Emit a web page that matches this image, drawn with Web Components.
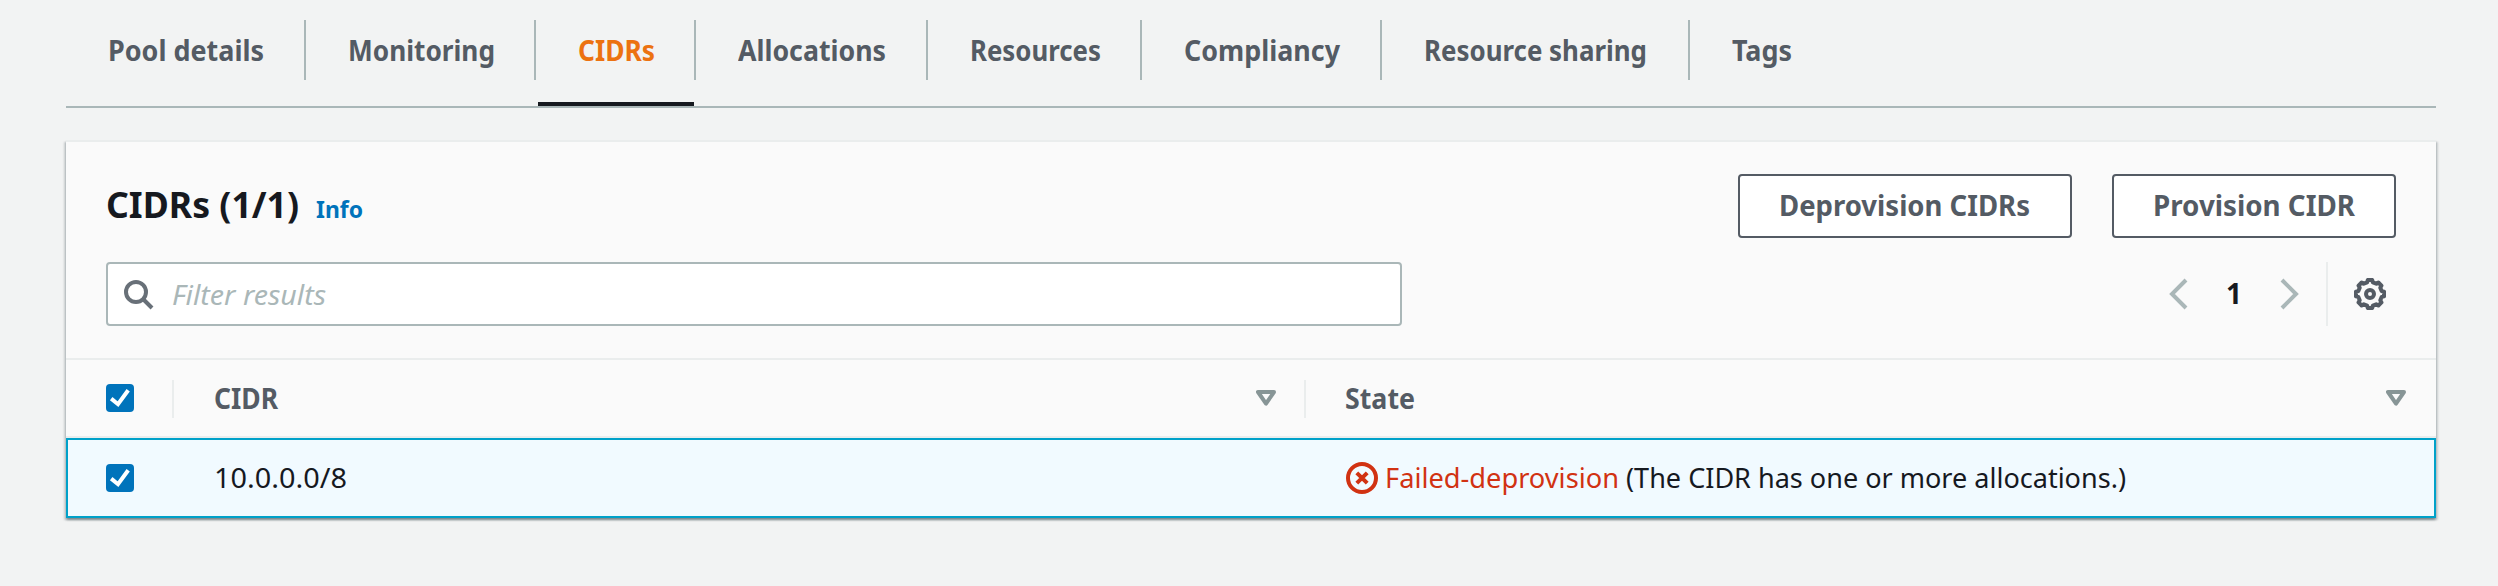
<!DOCTYPE html>
<html lang="en">
<head>
<meta charset="utf-8">
<title>CIDRs</title>
<style>
body{margin:0;background:#f2f3f3;font-family:"Noto Sans","Open Sans",sans-serif;font-size:28px;color:#16191f;height:586px;overflow:hidden}
</style>
</head>
<body>
<ipam-page></ipam-page>
<script>
const define=(name,html,after)=>customElements.define(name,class extends HTMLElement{
  constructor(){super();this.attachShadow({mode:"open"}).innerHTML=html;}
  connectedCallback(){if(after)after.call(this,this.shadowRoot);}
});

/* A label set to an exact advance width */
define("fit-text",`<style>
:host{display:inline-block;white-space:nowrap;line-height:40px;height:40px;flex:none}
span{display:inline-block;transform-origin:0 50%;white-space:nowrap}
</style><span><slot></slot></span>`,function(r){
  const w=+this.getAttribute("w"),s=r.querySelector("span");
  this.style.width=w+"px";
  s.style.transform="scaleX("+w/s.getBoundingClientRect().width+")";
});

define("nav-tab",`<style>
:host{display:block;position:relative;box-sizing:border-box;height:106px;padding:20px 0 0;font-weight:700;color:#545b64;flex:none}
.in{box-sizing:border-box;height:60px;padding:10px 0 0 42px;border-right:2px solid #aab7b8}
:host([last]) .in{border:0}
:host([active]){color:#ec7211}
:host([active])::after{content:"";position:absolute;left:2px;right:2px;bottom:0;height:4px;background:#16191f}
</style><div class="in"><slot></slot></div>`,function(){this.style.width=this.getAttribute("w")+"px";});

define("tab-bar",`<style>
:host{display:flex;border-bottom:2px solid #aab7b8;height:106px}
</style><slot></slot>`);

define("ui-button",`<style>
:host{display:flex;align-items:flex-start;justify-content:center;box-sizing:border-box;height:64px;padding:9px 1px 0 0;border:2px solid #545b64;border-radius:4px;background:#fff;color:#545b64;font-weight:700}
</style><slot></slot>`,function(){this.style.width=this.getAttribute("w")+"px";});

define("check-box",`<style>
:host{display:block;width:28px;height:28px;border-radius:4px;background:#0073bb;flex:none}
svg{display:block}
</style><svg width="28" height="28" viewBox="0 0 28 28" fill="none" stroke="#fff" stroke-width="4"><path d="M5.2 14.6 12 20.2 22.2 6.2"/></svg>`);

define("sort-icon",`<style>
:host{display:block;width:20px;height:16px;flex:none}svg{display:block}
</style><svg width="20" height="16" viewBox="0 0 20 16" fill="none" stroke="#879596" stroke-width="4" stroke-linejoin="round"><path d="M2 2H18L10 13.6Z"/></svg>`);

define("search-input",`<style>
:host{display:flex;box-sizing:border-box;width:1296px;height:64px;border:2px solid #aab7b8;border-radius:4px;background:#fff;padding:10px 0 0 16px;color:#aab7b8;font-style:italic}
svg{display:block;margin:6px 18px 0 0}
</style><svg width="30" height="30" viewBox="0 0 30 30" fill="none" stroke="#687078" stroke-width="4"><circle cx="12" cy="12" r="10"/><path d="M19 19 28 28"/></svg><slot></slot>`);

define("page-controls",`<style>
:host{display:flex;height:64px}
svg{display:block;flex:none}
.pg{display:flex;padding-top:16px;width:157px}
.n{font-weight:700;margin:-5px 0 0 37px;width:53px}
.gear{border-left:2px solid #eaeded;padding:16px 10px 0 26px}
</style>
<div class="pg"><svg width="20" height="32" viewBox="0 0 20 32" fill="none" stroke="#aab7b8" stroke-width="4"><path d="M17 2 3 16 17 30"/></svg>
<div class="n"><fit-text w="16">1</fit-text></div>
<svg width="20" height="32" viewBox="0 0 20 32" fill="none" stroke="#aab7b8" stroke-width="4"><path d="M3 2 17 16 3 30"/></svg></div>
<div class="gear"><svg width="32" height="32" viewBox="0 0 32 32" fill="none" stroke="#545b64" stroke-width="4" stroke-linejoin="round"><path id="g"/><circle cx="16" cy="16" r="4"/></svg></div>`,function(r){
  let d="";
  for(let i=0;i<8;i++){
    [[-14,12],[-9,14.2],[9,14.2],[14,12]].forEach(([o,q])=>{
      const a=(i*45+o-90)*Math.PI/180;
      d+=(d?"L":"M")+(16+q*Math.cos(a)).toFixed(2)+" "+(16+q*Math.sin(a)).toFixed(2);
    });
  }
  r.getElementById("g").setAttribute("d",d+"Z");
});

define("status-text",`<style>
:host{display:flex;color:#d13212}
svg{display:block;margin:5px 7px 0 0;flex:none}
</style><svg width="32" height="32" viewBox="0 0 32 32" fill="none" stroke="#d13212" stroke-width="4"><circle cx="16" cy="16" r="14"/><path d="M10.8 10.8 21.2 21.2M21.2 10.8 10.8 21.2"/></svg><slot></slot>`);

define("cidr-table",`<style>
:host{display:block}
.row{display:grid;grid-template-columns:106px 1134px 1fr;box-sizing:border-box}
.head{height:80px;border-top:2px solid #eaeded;border-bottom:2px solid #eaeded;color:#545b64;font-weight:700}
.body{height:80px;border:2px solid #00a1c9;background:#f1faff;grid-template-columns:104px 1132px 1fr}
.c{display:flex;position:relative;box-sizing:border-box}
.head .c{height:38px;margin-top:20px;border-right:2px solid #eaeded}
.head .c:first-child{width:108px}
.head .c:nth-child(2){margin-left:2px;padding-left:40px}
.head .c:last-child{border:0;padding-left:39px}
.head fit-text{margin-top:-2px}
.head check-box{margin:4px 0 0 40px}
.head sort-icon{margin:10px 28px 0 auto}
.head .c:last-child sort-icon{margin-right:30px}
.body check-box{margin:24px 0 0 38px}
.body .c{padding-top:17px}
.body .c:first-child{padding-top:0}
.body .c:nth-child(2){padding-left:42px}
.body .c:last-child{padding-left:42px}
</style>
<div class="row head">
<div class="c"><check-box></check-box></div>
<div class="c"><fit-text w="64">CIDR</fit-text><sort-icon></sort-icon></div>
<div class="c"><fit-text w="70">State</fit-text><sort-icon></sort-icon></div>
</div>
<div class="row body">
<div class="c"><check-box></check-box></div>
<div class="c"><fit-text w="133">10.0.0.0/8</fit-text></div>
<div class="c"><status-text><fit-text w="234">Failed-deprovision</fit-text></status-text><fit-text w="500" style="margin-left:7px">(The CIDR has one or more allocations.)</fit-text></div>
</div>`);

define("cidr-panel",`<style>
:host{display:block;margin-top:32px;border-top:2px solid #eaeded;background:#fafafa;box-shadow:0 2px 2px 0 rgba(0,28,36,.3),2px 2px 2px 0 rgba(0,28,36,.15),-2px 2px 2px 0 rgba(0,28,36,.15)}
.top{display:flex;height:64px;padding:32px 40px 0;gap:40px}
.title{display:flex;margin-right:auto}
.title fit-text{margin-top:11px;font-weight:700}
.big{font-size:36px}
.title .info{font-size:24px;color:#0073bb;margin:15px 0 0 17px}
.tools{display:flex;justify-content:space-between;padding:24px 40px 32px}
</style>
<div class="top">
<div class="title"><fit-text class="big" w="193">CIDRs (1/1)</fit-text><fit-text class="info" w="47">Info</fit-text></div>
<ui-button w="334"><fit-text w="251">Deprovision CIDRs</fit-text></ui-button>
<ui-button w="284"><fit-text w="202">Provision CIDR</fit-text></ui-button>
</div>
<div class="tools"><search-input><fit-text w="154">Filter results</fit-text></search-input><page-controls></page-controls></div>
<cidr-table></cidr-table>`);

define("ipam-page",`<style>
:host{display:block;width:2370px;margin-left:66px}
</style>
<tab-bar>
<nav-tab w="240"><fit-text w="156">Pool details</fit-text></nav-tab>
<nav-tab w="230"><fit-text w="147">Monitoring</fit-text></nav-tab>
<nav-tab w="160" active><fit-text w="77">CIDRs</fit-text></nav-tab>
<nav-tab w="232"><fit-text w="148">Allocations</fit-text></nav-tab>
<nav-tab w="214"><fit-text w="131">Resources</fit-text></nav-tab>
<nav-tab w="240"><fit-text w="156">Compliancy</fit-text></nav-tab>
<nav-tab w="308"><fit-text w="223">Resource sharing</fit-text></nav-tab>
<nav-tab w="150" last><fit-text w="60">Tags</fit-text></nav-tab>
</tab-bar>
<cidr-panel></cidr-panel>`);
</script>
</body>
</html>
